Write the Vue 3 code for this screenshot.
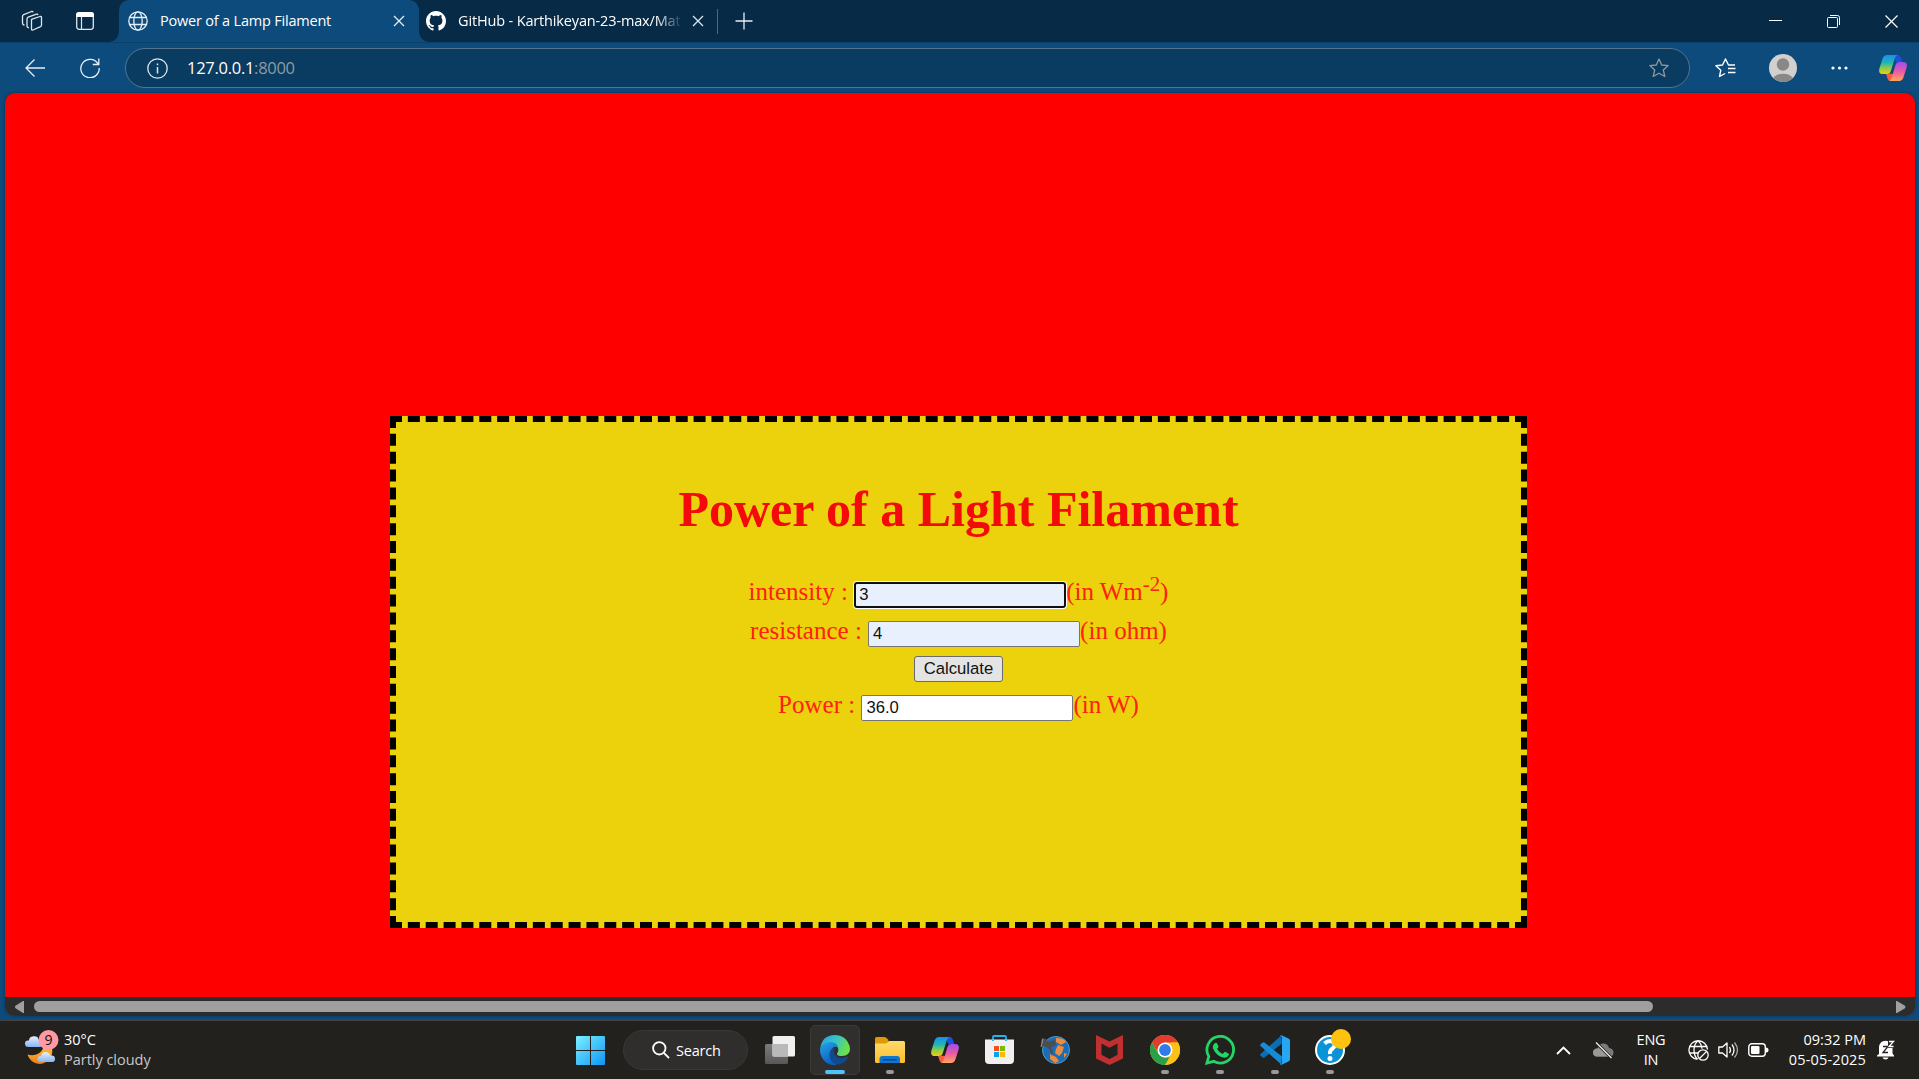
<script setup>
import { ref } from 'vue'

const intensity = ref('3')
const resistance = ref('4')
const power = ref('36.0')
</script>

<template>
  <div class="desktop">
    <svg class="defs" width="0" height="0">
      <defs>
        <linearGradient id="cpL" x1="0" y1="0" x2="0" y2="1">
          <stop offset="0" stop-color="#1a8fee" />
          <stop offset=".4" stop-color="#20b5b0" />
          <stop offset=".7" stop-color="#8ccc4c" />
          <stop offset="1" stop-color="#f5cc0c" />
        </linearGradient>
        <linearGradient id="cpR" x1="0" y1="0" x2="0" y2="1">
          <stop offset="0" stop-color="#a04df0" />
          <stop offset=".5" stop-color="#ea5aa5" />
          <stop offset="1" stop-color="#ffa65a" />
        </linearGradient>
        <symbol id="copilot" viewBox="0 0 28 26">
          <path d="M14 0h5q2 0 3 3l1.500 4.500h-6Z" fill="#1c50d8" />
          <path d="M7 18.500l1.500 5q.8 2.500 3 2.500h4l1-7Z" fill="#f4603c" />
          <path d="M8 0h10.500q-2 .8-2.800 3.500l-3.700 12q-1 3.500-4 3.500H4q-5 0-3.600-5.500L3.500 3.800Q4.700 0 8 0Z" fill="url(#cpL)" />
          <path d="M20 26H10q2-.8 2.800-3.500l3.500-12Q17.300 7 20.500 7H24q5 0 3.600 5.500l-3.100 9.700Q23.300 26 20 26Z" fill="url(#cpR)" />
        </symbol>
      </defs>
    </svg>

    <header class="tabbar">
      <svg class="i-work" width="22" height="22" viewBox="0 0 22 22" fill="none" stroke="#dfe6ec" stroke-width="1.300" stroke-linejoin="round">
        <path d="M10.500 9.300 19 6.500q1.500-.4 1.500 1V15q0 1.200-1 1.700L12 20q-1.500.6-1.500-1Z" />
        <path d="M8 17.500q-2 .3-2-1.500V9q0-1.300 1.200-1.800l8.300-3q1.200-.3 1.500.8" />
        <path d="M3.500 15Q1.500 15 1.500 13V6.500q0-1.300 1.200-1.800l7.800-3.200q1.200-.3 1.700.8" />
      </svg>
      <svg class="i-vert" width="18" height="18" viewBox="0 0 18 18">
        <rect x=".7" y=".7" width="16.600" height="16.600" rx="2.500" fill="none" stroke="#dfe6ec" stroke-width="1.300" />
        <path d="M0 5V3q0-3 3-3h12q3 0 3 3v2Z" fill="#fff" />
        <path d="M5.500 5v12" stroke="#dfe6ec" stroke-width="1.200" />
      </svg>
      <div class="tab active">
        <svg class="globe" width="20" height="20" viewBox="0 0 20 20" fill="none" stroke="#e8eef4" stroke-width="1.300">
          <circle cx="10" cy="10" r="9.200" /><ellipse cx="10" cy="10" rx="4.200" ry="9.200" /><path d="M1.500 6.500h17M1.500 13.500h17" />
        </svg>
        <span class="tt t1">Power of a Lamp Filament</span>
        <svg class="x1" width="12" height="12" viewBox="0 0 12 12" stroke="#e8eef4" stroke-width="1.300"><path d="M1 1l10 10M11 1 1 11" /></svg>
      </div>
      <div class="tab second">
        <svg width="20" height="20" viewBox="0 0 16 16" fill="#fff"><path d="M8 0C3.580 0 0 3.580 0 8c0 3.540 2.290 6.530 5.470 7.590.4.070.55-.17.55-.38 0-.19-.01-.82-.01-1.490-2.010.37-2.530-.49-2.690-.94-.09-.23-.48-.94-.82-1.130-.28-.15-.68-.52-.01-.53.63-.01 1.080.58 1.230.82.72 1.210 1.870.87 2.330.66.070-.52.28-.87.51-1.070-1.780-.2-3.640-.89-3.640-3.950 0-.87.31-1.590.82-2.150-.08-.2-.36-1.020.08-2.120 0 0 .67-.21 2.200.82.64-.18 1.320-.27 2-.27s1.360.09 2 .27c1.530-1.040 2.200-.82 2.200-.82.44 1.100.16 1.920.08 2.120.51.56.82 1.270.82 2.150 0 3.070-1.870 3.750-3.650 3.950.29.25.54.73.54 1.480 0 1.070-.01 1.930-.01 2.200 0 .21.15.46.55.38A8.010 8.010 0 0 0 16 8c0-4.420-3.580-8-8-8z" /></svg>
        <span class="tt t2">GitHub - Karthikeyan-23-max/Mat</span>
        <svg class="x2" width="12" height="12" viewBox="0 0 12 12" stroke="#dfe6ec" stroke-width="1.300"><path d="M1 1l10 10M11 1 1 11" /></svg>
      </div>
      <i class="sep"></i>
      <svg class="plus" width="18" height="18" viewBox="0 0 18 18" stroke="#e8eef4" stroke-width="1.300"><path d="M9 .5v17M.5 9h17" /></svg>
      <div class="winctl">
        <svg width="13" height="13" viewBox="0 0 13 13" stroke="#fff" stroke-width="1"><path d="M0 5.500h13" /></svg>
        <svg width="13" height="13" viewBox="0 0 13 13" fill="none" stroke="#fff" stroke-width="1"><rect x=".5" y="2.500" width="10" height="10" rx="1" /><path d="M3 .5h7.500q2 0 2 2V10" /></svg>
        <svg width="13" height="13" viewBox="0 0 13 13" stroke="#fff" stroke-width="1.200"><path d="M.5.5l12 12M12.500.5l-12 12" /></svg>
      </div>
    </header>

    <div class="toolbar">
      <svg class="back" width="20" height="18" viewBox="0 0 20 18" fill="none" stroke="#e8eef4" stroke-width="1.300"><path d="M9.500.5 1 9l8.500 8.500M1 9h19" /></svg>
      <svg class="reload" width="20" height="20" viewBox="0 0 20 20" fill="none" stroke="#e8eef4" stroke-width="1.300"><path d="M18.800 .5V6.500H12.800M18.300 6.500A9.200 9.200 0 1 0 19.200 10" /></svg>
      <div class="address">
        <svg class="info" width="21" height="21" viewBox="0 0 21 21" fill="none" stroke="#e0e7ed" stroke-width="1.300"><circle cx="10.500" cy="10.500" r="9.700" /><path d="M10.500 9v6.500M10.500 5.500v1.800" stroke-width="1.500" /></svg>
        <span class="url">127.0.0.1<b>:8000</b></span>
        <svg class="star" width="20" height="20" viewBox="0 0 20 20" fill="none" stroke="#8f989f" stroke-width="1.300" stroke-linejoin="round"><path d="M10 1l2.700 6 6.500.6-4.900 4.400 1.500 6.500L10 15.200l-5.800 3.300 1.500-6.500L.8 7.600 7.300 7Z" /></svg>
      </div>
      <svg class="favs" width="21" height="20" viewBox="0 0 21 20" fill="none" stroke="#fff" stroke-width="1.400" stroke-linejoin="round"><path d="M20 7h-6.500L10.500 1 7.500 7 .9 7.700l4.900 4.500L4.500 18.500 10 15.500M13 10.500h7.500M13 14.500h7.500" /></svg>
      <svg class="avatar" width="28" height="28" viewBox="0 0 28 28"><circle cx="14" cy="14" r="14" fill="#d2d0ce" /><circle cx="14" cy="10.500" r="6.200" fill="#8a8886" /><path d="M4.300 24A10.500 7 0 0 1 23.700 24 14 14 0 0 1 4.300 24Z" fill="#8a8886" /></svg>
      <svg class="dots" width="17" height="4" viewBox="0 0 17 4" fill="#fff"><circle cx="2" cy="2" r="1.600" /><circle cx="8.500" cy="2" r="1.600" /><circle cx="15" cy="2" r="1.600" /></svg>
      <svg class="cp" width="28" height="26"><use href="#copilot" /></svg>
    </div>

    <main class="viewport">
      <div class="page">
        <form class="box" @submit.prevent>
          <h1>Power of a Light Filament</h1>
          <div class="row r1">intensity : <input v-model="intensity" class="auto focus" type="text" />(in Wm<sup>-2</sup>)</div>
          <div class="row r2">resistance : <input v-model="resistance" class="auto" type="text" />(in ohm)</div>
          <div class="row r3"><button type="submit">Calculate</button></div>
          <div class="row r4">Power : <input v-model="power" type="text" />(in W)</div>
        </form>
      </div>
      <div class="scroll">
        <svg width="10" height="12" viewBox="0 0 10 12" fill="#a0a0a0"><path d="M9 0v12H8L.5 7.200q-1-1.200 0-2.400L8 0Z" /></svg>
        <i class="thumb"></i>
        <svg class="ra" width="10" height="12" viewBox="0 0 10 12" fill="#a0a0a0"><path d="M0 0v12h1l8-4.800q1-1.200 0-2.400L1 0Z" /></svg>
      </div>
    </main>

    <footer class="taskbar">
      <svg class="weather" width="34" height="36" viewBox="0 0 34 36">
        <defs>
          <linearGradient id="cl" x1="0" y1="0" x2="0" y2="1"><stop offset="0" stop-color="#e6f0ff" /><stop offset="1" stop-color="#86b4f4" /></linearGradient>
          <linearGradient id="mo" x1="0" y1="0" x2="0" y2="1"><stop offset="0" stop-color="#ffc93c" /><stop offset="1" stop-color="#ee7e18" /></linearGradient>
        </defs>
        <path d="M27 18q2 9-6 14-6 3.500-12 .5-5-3-6.500-8 6 2 11-1T19 14Z" fill="url(#mo)" />
        <path d="M3.500 17Q0 17 0 13.500T4 10.500q0-4 4.500-4.300T13.500 9.500q4 0 4 4T14 17Z" fill="url(#cl)" />
        <path d="M15.500 32q-3 0-3-3t3.500-3q.5-4 4.500-4t5 3.500q4.500-.5 4.500 3.300T26.500 32Z" fill="url(#cl)" />
        <circle cx="23.500" cy="10" r="10" fill="#ff99a4" />
        <text x="23.500" y="15" text-anchor="middle" font-size="14" fill="#111">9</text>
      </svg>
      <div class="wtext"><span>30°C</span><span class="dim">Partly cloudy</span></div>

      <svg class="start" width="29" height="29" viewBox="0 0 29 29">
        <defs><linearGradient id="wn" gradientUnits="userSpaceOnUse" x1="0" y1="0" x2="29" y2="29"><stop offset="0" stop-color="#7bf1ff" /><stop offset="1" stop-color="#0e95f8" /></linearGradient></defs>
        <path d="M0 1q0-1 1-1h13v14H0ZM15 0h13q1 0 1 1v13H15ZM0 15h14v14H1q-1 0-1-1ZM15 15h14v13q0 1-1 1H15Z" fill="url(#wn)" />
      </svg>
      <div class="search">
        <svg width="18" height="18" viewBox="0 0 18 18" fill="none" stroke="#fff" stroke-width="1.800"><circle cx="7.300" cy="7.300" r="6.200" /><path d="M11.800 11.800 17 17" /></svg>
        <span>Search</span>
      </div>
      <div class="apps">
        <div class="app">
          <svg width="30" height="28" viewBox="0 0 30 28"><defs><linearGradient id="tv" x1="0" y1="0" x2="0" y2="1"><stop offset="0" stop-color="#7c7c7c" /><stop offset="1" stop-color="#575757" /></linearGradient></defs><rect y="8" width="23" height="20" rx="1.500" fill="url(#tv)" /><rect x="7.500" width="22.500" height="20.500" rx="1.500" fill="#f0f0f0" /><path d="M7.500 8H23v12.500H9q-1.500 0-1.500-1.500Z" fill="#b9b9b9" /></svg>
        </div>
        <div class="app on">
          <svg width="30" height="30" viewBox="0 0 30 30">
            <defs>
              <linearGradient id="e1" x1="0" y1="0" x2="1" y2=".35"><stop offset="0" stop-color="#2a9fe0" /><stop offset=".5" stop-color="#33c1cf" /><stop offset="1" stop-color="#6be04e" /></linearGradient>
              <linearGradient id="e2" x1="0" y1="0" x2=".5" y2="1"><stop offset="0" stop-color="#25a4ea" /><stop offset="1" stop-color="#0a5fbd" /></linearGradient>
            </defs>
            <path d="M.3 13Q2 .2 15 0q8.500.3 12.500 6.500Q30 10.500 30 14.500q-.5 6.500-8 6.500-5 0-5-2 0-.6.700-1.500 1.300-2 .3-4.500-2-4-8-4Q2.500 9 .3 13Z" fill="url(#e1)" />
            <path d="M.2 13Q3.500 7 10.500 7q6.500.2 8 6-4-2.500-6.500.5Q9 17 10.500 22q1.500 5 6 7.800Q9 31 4 25.500-.8 20 .2 13Z" fill="url(#e2)" />
            <path d="M14.500 12.500q-4 1.300-5 6Q9 24 13 27.500q3 2.500 6.500 2 6-2 8.800-7 0-1.200-1.300-.8-6 3-10.500-.2-4.500-4-2-9Z" fill="#114a91" />
          </svg><i></i>
        </div>
        <div class="app run">
          <svg width="30" height="26" viewBox="0 0 30 26"><defs><linearGradient id="fo" x1="0" y1="0" x2="0" y2="1"><stop offset="0" stop-color="#ffdb6b" /><stop offset="1" stop-color="#fdbd2c" /></linearGradient></defs><path d="M0 1.500Q0 0 1.500 0H9q1.500 0 2.500 1l2 2v4H0Z" fill="#dd9a05" /><path d="M0 6.500h10q1.500 0 2.500-1l1.500-1.500h14.500q1.500 0 1.500 1.500v19q0 1.500-1.500 1.500h-27Q0 26 0 24.500Z" fill="url(#fo)" /><path d="M4.500 26v-4q0-3 3-3h14.500q3 0 3 3v4Z" fill="#0d76cf" /><path d="M8 22.800h14" stroke="#073f8d" stroke-width="1.300" /></svg><i></i>
        </div>
        <div class="app"><svg width="28" height="26"><use href="#copilot" /></svg></div>
        <div class="app">
          <svg class="store" width="29" height="30" viewBox="0 0 29 30"><path d="M8 6V2q0-1 1-1h11q1 0 1 1v4" fill="none" stroke="#27b2ee" stroke-width="1.800" /><path d="M0 4.500h29V25q0 4-4 4H4q-4 0-4-4Z" fill="#f0f0f0" /><path d="M9 11h5v5H9Z" fill="#f25022" /><path d="M15 11h5v5h-5Z" fill="#7fba00" /><path d="M9 17h5v5H9Z" fill="#00a4ef" /><path d="M15 17h5v5h-5Z" fill="#ffb900" /><path d="M8 4.500V6M21 4.500V6" stroke="#27b2ee" stroke-width="1.800" /></svg>
        </div>
        <div class="app">
          <svg width="30" height="28" viewBox="0 0 30 28"><circle cx="16" cy="14" r="13.500" fill="#1d6cb8" stroke="#4aa0cf" /><path d="M16 2q8 0 10 4l-5 3-5-3ZM18 9l6 2-2 6-3 3-4-3 1-4ZM10 18l6 3 3 4-4 2-5-4Z" fill="#ef8b3c" /><path d="M24 17l3 1-3 4Z" fill="#ef8b3c" /><path d="M2 2l4 1 2 3 7-2 1 5-5 2 2 5-1 4-2-6-3-3-5-1-1-4Z" fill="#4d4d4d" /><path d="M3 3 1 11" stroke="#999" /></svg>
        </div>
        <div class="app">
          <svg width="27" height="30" viewBox="0 0 27 30"><path d="M0 0 13.500 6.500 27 0V23.500L13.500 30 0 23.500ZM5.500 8.500V19.800L13.500 24l8-4.200V8.500l-8 4.200Z" fill="#c22f30" fill-rule="evenodd" /></svg>
        </div>
        <div class="app run">
          <svg width="30" height="30" viewBox="0 0 30 30"><circle cx="15" cy="15" r="15" fill="#fbc116" /><path d="M2 7.500A15 15 0 0 1 28 7.500H15L9 19Z" fill="#e33b2e" /><path d="M2 7.500 8.500 18.750Q11 22 15 22.500h6.500L15 30A15 15 0 0 1 2 7.500Z" fill="#2b9f49" /><path d="M15 30l6.500-11.300V7.500H28A15 15 0 0 1 15 30Z" fill="#fbc116" /><circle cx="15" cy="15" r="7.500" fill="#fff" /><circle cx="15" cy="15" r="5.900" fill="#2f7bea" /></svg><i></i>
        </div>
        <div class="app run">
          <svg width="30" height="30" viewBox="0 0 30 30"><path d="M1.900 28.100 3.800 21.500A13.300 13.300 0 1 1 8.700 26.300Z" fill="none" stroke="#25d366" stroke-width="2.800" /><path d="M10.200 8q1.200-.6 1.900.4l1.300 2.900q.2.800-.4 1.500l-.9 1.200q2 3.600 5.600 4.900l1.500-1.700q.6-.6 1.300-.3l3 1.500q.6.400.4 1.200-.9 3.200-4.600 3.100Q11.500 21.500 8 13.500 7.200 10 10.200 8Z" fill="#25d366" /></svg><i></i>
        </div>
        <div class="app run">
          <svg width="30" height="30" viewBox="0 0 30 30"><path d="M22 8.500 4.500 22.500q-1 .7-1.800 0L.5 20.700q-.8-.8 0-1.600L21 .7Z" fill="#0b6db5" /><path d="M22 21.500 4.500 7.500q-1-.7-1.800 0L.5 9.300q-.8.8 0 1.600L21 29.300Z" fill="#168bd6" /><path d="M21.500.2 28.500 3.500Q30 4.300 30 6v18q0 1.700-1.500 2.500L21.500 29.800q-.8.300-1.500-.8 2 .2 2-2V3q0-2.200-2-2 .7-1.100 1.500-.8Z" fill="#27a6f1" /></svg><i></i>
        </div>
        <div class="app run">
          <svg width="30" height="30" viewBox="0 0 30 30"><circle cx="15" cy="15" r="14" fill="#0a94d8" stroke="#fff" stroke-width="2" /><path d="M9.500 8.500Q14 4.500 18 7q3.500 3-.5 6.500-3 2-2.500 5.500" fill="none" stroke="#fff" stroke-width="4" /><circle cx="15" cy="23.500" r="2.500" fill="#fff" /></svg><i></i>
          <b class="badge"></b>
        </div>
      </div>

      <div class="tray">
        <svg class="chev" width="15" height="9" viewBox="0 0 15 9" fill="none" stroke="#fff" stroke-width="1.800"><path d="M1 8l6.500-6.500L14 8" /></svg>
        <svg class="cloud" width="21" height="17" viewBox="0 0 21 17"><path d="M4 14.500q-4-.3-4-4t4.500-4Q6 1.500 10.500 1.500t5.500 4.500q4.500.5 4.500 4.500t-4 4Z" fill="#7b7b7b" /><path d="M4 14.500q-4-.3-4-4t4.500-4q3-.5 5.500 2.500l6 5.500Z" fill="#999" /><path d="M3 .5 18.500 16" stroke="#24231f" stroke-width="3" /><path d="M3 .5 18.500 16" stroke="#f2f2f2" stroke-width="1.300" /></svg>
        <div class="lang"><span>ENG</span><span>IN</span></div>
        <svg class="net" width="21" height="21" viewBox="0 0 21 21" fill="none" stroke="#fff" stroke-width="1.300"><path d="M19.500 9.500A9.300 9.300 0 1 0 9.500 19.300M1.500 6.500h17M1.500 13H10M10 .8Q6 4 6 10t3.500 9.300M10 .8q3.500 3 4 8" /><circle cx="15" cy="15" r="5.200" /><path d="M11.500 18.500l7-7" /></svg>
        <svg class="vol" width="21" height="18" viewBox="0 0 21 18" fill="none" stroke="#fff" stroke-width="1.300" stroke-linejoin="round"><path d="M.8 6v6h3.700l4.500 4V2L4.500 6ZM11.500 6q2 3 0 6M14 3.500q4 5.500 0 11" /><path d="M16.500 1.500q6 7.500 0 15" stroke="#aaa" /></svg>
        <svg class="bat" width="21" height="14" viewBox="0 0 21 14"><rect x=".8" y=".8" width="16.500" height="12.400" rx="3" fill="none" stroke="#fff" stroke-width="1.400" /><rect x="3" y="3" width="8.500" height="8" rx="1" fill="#fff" /><path d="M18 4.500q2.500 0 2.500 2.500T18 9.500Z" fill="#fff" /></svg>
        <div class="clock"><span>09:32 PM</span><span class="date">05-05-2025</span></div>
        <svg class="bell" width="18" height="20" viewBox="0 0 18 20"><path d="M2 14V7.500Q2.500 1 8.500.8q6.500 0 7 6.700v6l1.500 2v1H0v-1ZM5.500 17.500h6q-.6 2-3 2t-3-2Z" fill="#fff" /><path d="M6 6.500h5l-5 6h5" fill="none" stroke="#222" stroke-width="1.300" /><path d="M11 0h7v8h-7Z" fill="#24231f" /><path d="M12 1.500h4.500l-4.500 5h4.500" fill="none" stroke="#fff" stroke-width="1.300" /></svg>
      </div>
    </footer>
  </div>
</template>

<style>
html, body { margin: 0; overflow: hidden; }
</style>

<style scoped>
.desktop { width: 1919px; height: 1079px; display: flex; flex-direction: column; background: #0c4b7b; overflow: hidden; font-family: "Open Sans", "Noto Sans", sans-serif; color: #fff; }
.desktop * { box-sizing: border-box; }
svg { display: block; flex: none; }
.defs { height: 0; }
span { white-space: nowrap; }

.tabbar { height: 42px; flex: none; display: flex; align-items: center; background: #072a47; }
.i-work { margin-left: 21px; }
.i-vert { margin-left: 33px; }
.tab { display: flex; align-items: center; height: 42px; flex: none; }
.active { position: relative; width: 300px; margin-left: 25px; padding-left: 9px; background: #0c4b7b; border-radius: 10px 10px 0 0; }
.active::before, .active::after { content: ""; position: absolute; bottom: 0; width: 10px; height: 10px; }
.active::before { left: -10px; background: radial-gradient(circle at 0 0, #072a47 9.500px, #0c4b7b 10px); }
.active::after { right: -10px; background: radial-gradient(circle at 100% 0, #072a47 9.500px, #0c4b7b 10px); }
.tt { font-size: 14.500px; line-height: 20px; overflow: hidden; margin-top: -1px; }
.t1 { margin-left: 12px; width: 221px; letter-spacing: -.2px; }
.x1 { margin-left: 12px; }
.second { margin-left: 7px; width: 291px; }
.t2 { margin-left: 12px; width: 223px; letter-spacing: -.15px; -webkit-mask-image: linear-gradient(90deg, #000 198px, transparent 225px); mask-image: linear-gradient(90deg, #000 198px, transparent 225px); }
.x2 { margin-left: 11px; }
.sep { width: 1px; height: 25px; background: #4d6a81; }
.plus { margin-left: 17px; }
.winctl { margin-left: auto; margin-right: 21px; display: flex; gap: 45px; }

.toolbar { height: 51px; flex: none; display: flex; align-items: center; border-top: 1px solid #0b4068; }
.back { margin-left: 25px; }
.reload { margin-left: 35px; }
.address { height: 40px; width: 1565px; margin-left: 25px; display: flex; align-items: center; background: #0a3b60; border: 1px solid #55758f; border-radius: 20px; }
.info { margin-left: 21px; }
.url { margin-left: 19px; font-size: 16.500px; letter-spacing: -.28px; line-height: 22px; margin-top: -1px; }
.url b { font-weight: 400; color: #8e9ba5; }
.star { margin-left: auto; margin-right: 20px; }
.favs { margin-left: 25px; }
.avatar { margin-left: 33px; }
.dots { margin-left: 34px; }
.cp { margin-left: 31px; }

.viewport { height: 923px; margin: 0 4px 0 5px; flex: none; border-radius: 10px; overflow: hidden; background: red; box-shadow: 0 0 3px #06304f; }
.page { height: 904px; padding: 323px 0 0 385px; }
.box { width: 1137px; height: 512px; border: 6px dashed #000; background: #ebd20c; padding-top: 59px; text-align: center; font-family: "Liberation Serif", serif; color: #ff2010; }
h1 { margin: 0; font-size: 50px; line-height: 56px; color: #f40a0a; font-weight: 700; white-space: nowrap; }
.row { font-size: 25px; line-height: 29px; height: 39px; white-space: nowrap; }
.r1 { margin-top: 40px; }
.r2 { height: 35px; }
sup { font-size: 20.830px; line-height: 0; vertical-align: super; }
input, button { font-family: "Liberation Sans", sans-serif; font-size: 16.670px; line-height: 19px; height: 26px; margin: 0; color: #111; }
input { width: 212px; padding: 1px 3px 1px 4px; border: 1px solid #767676; border-radius: 2px; background: #fff; outline: none; }
.auto { background: #e8f0fe; }
.focus { border: 2px solid #101010; border-radius: 3px; box-shadow: 0 0 0 1px #fff; padding: 0 3px; }
button { width: 89px; padding: 0; border: 1px solid #6b6b6b; border-radius: 3px; background: #e4e4e4; }
.scroll { height: 19px; background: #2c2c2c; display: flex; align-items: center; padding-left: 10px; }
.thumb { width: 1619px; height: 11px; margin-left: 9px; border-radius: 6px; background: #9f9f9f; }
.ra { margin-left: auto; margin-right: 9px; }

.taskbar { height: 59px; margin-top: 4px; flex: none; display: flex; align-items: center; background: #22211e; border-top: 1px solid #44433f; }
.weather { margin: 0 0 4px 25px; }
.wtext { width: 110px; margin-left: 5px; display: flex; flex-direction: column; font-size: 14.500px; line-height: 20px; letter-spacing: -.02px; }
.dim { color: #c8c8c8; }
.start { margin-left: 402px; }
.search { width: 125px; height: 40px; margin-left: 18px; display: flex; align-items: center; background: #2f2e2c; border: 1px solid #393836; border-radius: 20px; font-size: 14.500px; letter-spacing: -.2px; padding-left: 28px; gap: 6px; }
.apps { margin-left: 4px; display: flex; }
.app { position: relative; width: 55px; height: 50px; display: flex; align-items: center; justify-content: center; }
.on::before { content: ""; position: absolute; inset: 0 2px 0 3px; background: #302f2d; border: 1px solid #3b3a38; border-radius: 5px; }
.app svg { position: relative; }
.app i { position: absolute; bottom: 1px; left: 24px; width: 8px; height: 4px; border-radius: 2px; background: #999; }
.on i { left: 18px; width: 20px; background: #4cc2ff; }
.badge { position: absolute; left: 29px; top: 4px; width: 20px; height: 20px; border-radius: 50%; background: #ffc20e; }
.tray { margin-left: auto; margin-right: 24px; display: flex; align-items: center; font-size: 14.500px; line-height: 20px; }
.cloud { margin-left: 22px; }
.lang { width: 40px; margin-left: 17px; display: flex; flex-direction: column; align-items: center; letter-spacing: -.2px; }
.net { margin-left: 17px; }
.vol { margin-left: 9px; }
.bat { margin-left: 9px; }
.clock { width: 97px; display: flex; flex-direction: column; align-items: flex-end; letter-spacing: 0; }
.date { letter-spacing: .15px; }
.bell { margin-left: 11px; }
</style>
